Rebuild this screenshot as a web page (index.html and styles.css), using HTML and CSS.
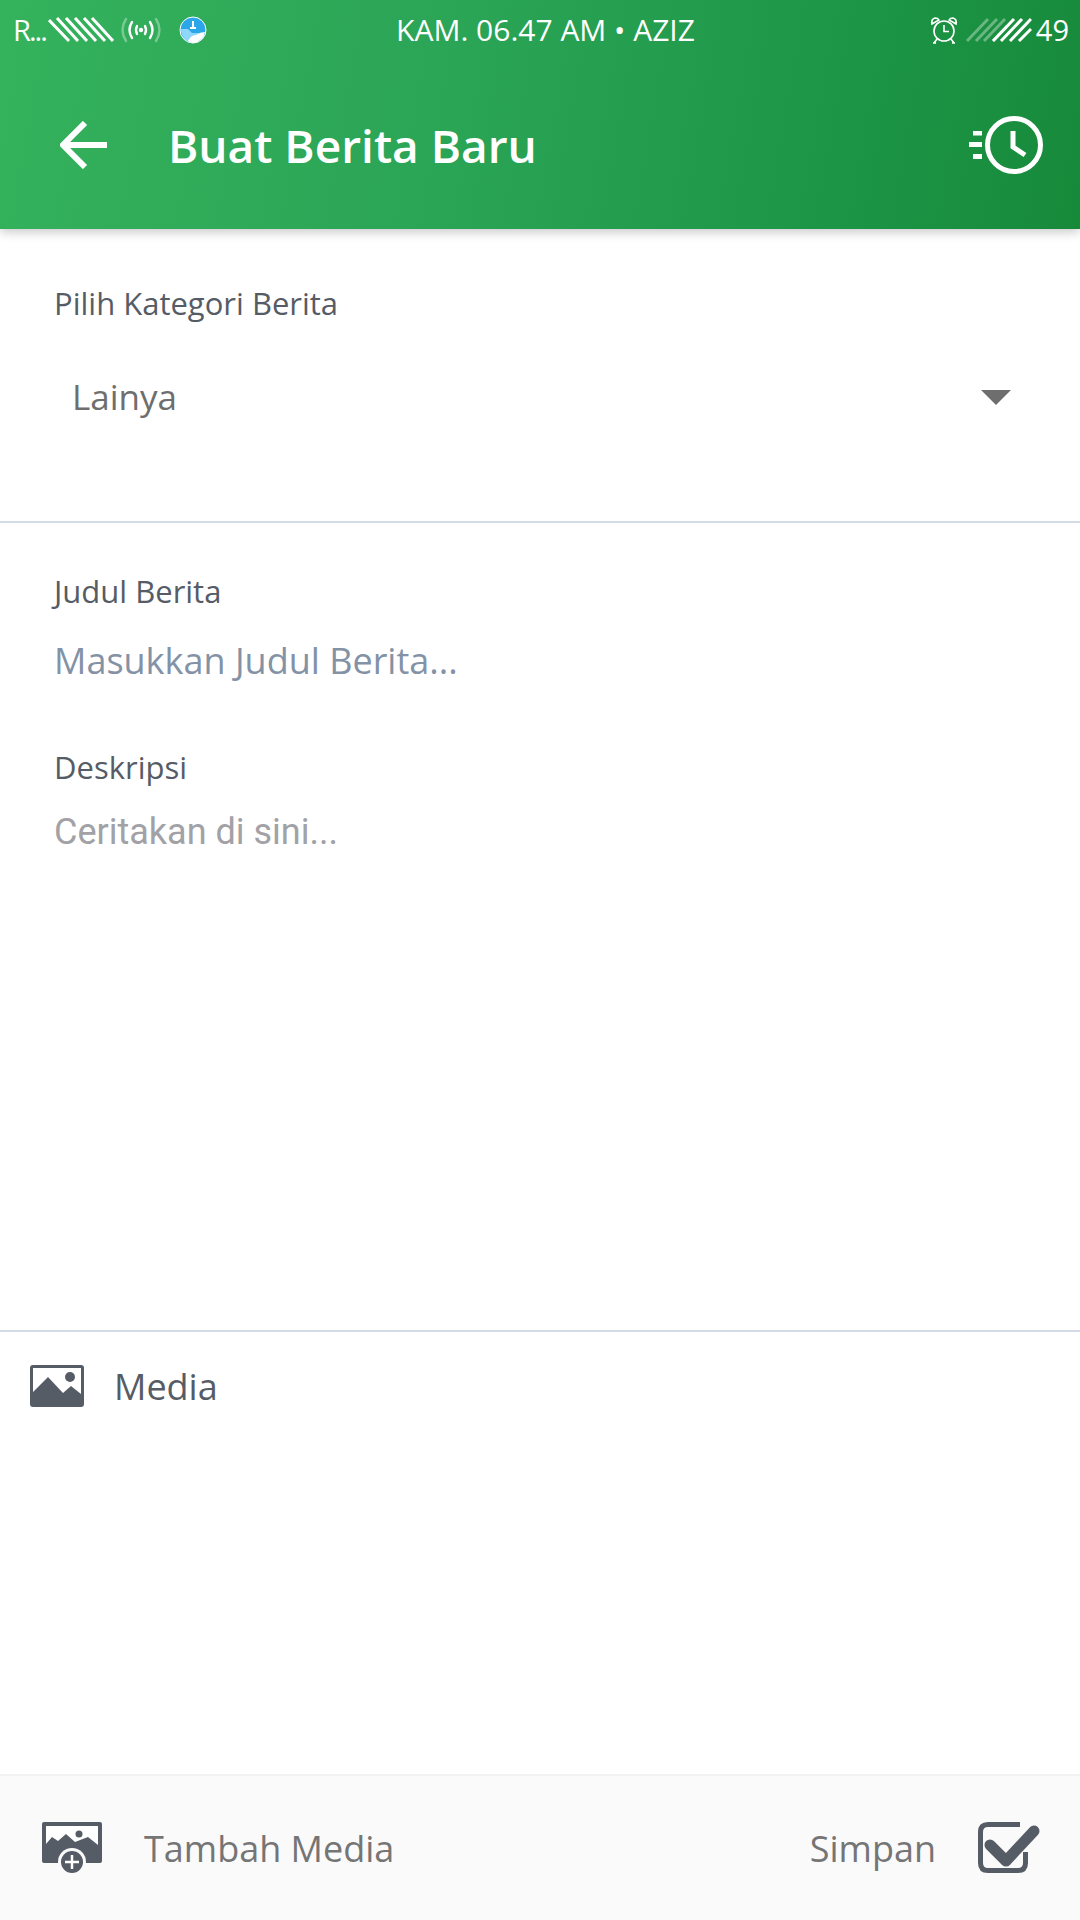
FILE: index.html
```html
<!DOCTYPE html>
<html lang="id">
<head>
    <meta charset="UTF-8">
    <meta name="viewport" content="width=device-width, initial-scale=1.0">
    <title>Buat Berita Baru</title>
    <link rel="stylesheet" href="styles.css">
</head>
<body>
    <div class="app">
        <header class="header">
            <div class="status-bar">
                <div class="status-left">
                    <span class="carrier">R...</span>
                    <svg class="hatch" width="66" height="26" viewBox="0 0 66 26">
                        <g stroke="#fff" stroke-width="3" fill="none">
                            <path d="M1 3 L21 24M9 1 L30 24M18 1 L39 24M27 1 L48 24M36 1 L57 24M44 1 L65 24"/>
                        </g>
                    </svg>
                    <svg class="hotspot" width="42" height="26" viewBox="0 0 42 26">
                        <g stroke="#fff" stroke-width="2.4" fill="none" stroke-linecap="round">
                            <path d="M6 2 Q-1 13 6 24M36 2 Q43 13 36 24" opacity="0.35"/>
                            <path d="M12 5 Q7 13 12 21M30 5 Q35 13 30 21"/>
                            <path d="M17 9 Q15 13 17 17M25 9 Q27 13 25 17"/>
                        </g>
                        <circle cx="21" cy="13" r="2.2" fill="#fff"/>
                    </svg>
                    <svg class="weather" width="28" height="28" viewBox="0 0 28 28">
                        <circle cx="14" cy="14" r="13" fill="#2ba6e8" stroke="#fff" stroke-width="1"/>
                        <path d="M1.500 13 H9 L13 17 H20 L14 27 Q4 27 1.500 13Z" fill="#8fd6fb"/>
                        <path d="M9 25 Q12 19 17 19 Q21 16 26 16 Q25 25 14 27 Q11 27 9 25Z" fill="#fff"/>
                        <path d="M13 5 H15 V11 H17 V13 H11 V11 H13Z" fill="#fff"/>
                    </svg>
                </div>
                <div class="status-center">KAM. 06.47 AM • AZIZ</div>
                <div class="status-right">
                    <svg class="alarm" width="28" height="28" viewBox="0 0 28 28">
                        <g stroke="#fff" stroke-width="1.6" fill="none">
                            <circle cx="14" cy="15" r="10"/>
                            <path d="M14 9 V15.500 H19"/>
                            <path d="M2 8 Q1 3 5 2 Q8 2 9 4Z M26 8 Q27 3 23 2 Q20 2 19 4Z"/>
                            <path d="M7 23 L4 27M21 23 L24 27M3 27 H6M22 27 H25"/>
                        </g>
                    </svg>
                    <svg class="hatch" width="66" height="26" viewBox="0 0 66 26">
                        <g stroke="#fff" stroke-width="3" fill="none">
                            <path d="M1 24 L22 2M10 24 L31 2M18 24 L39 2M27 24 L41 9" opacity="0.35"/>
                            <path d="M27 24 L48 2M35 24 L56 2M44 24 L65 2M53 24 L65 12"/>
                        </g>
                    </svg>
                    <span>49</span>
                </div>
            </div>
            <div class="toolbar">
                <svg class="back-icon" width="48" height="48" viewBox="0 0 48 48">
                    <path d="M47 24 H4 M25 2 L3 24 L25 46" stroke="#fff" stroke-width="6" fill="none"/>
                </svg>
                <h1 class="title">Buat Berita Baru</h1>
                <svg class="history-icon" width="76" height="60" viewBox="0 0 76 60">
                    <circle cx="46" cy="30" r="26.500" stroke="#fff" stroke-width="5" fill="none"/>
                    <path d="M45 16 V32 L57 40" stroke="#fff" stroke-width="5" fill="none"/>
                    <path d="M5 16 H14 V20.500 H5Z M1 27 H14 V32 H1Z M5 39 H14 V44 H5Z" fill="#fff"/>
                </svg>
            </div>
        </header>

        <section class="category">
            <label class="field-label">Pilih Kategori Berita</label>
            <div class="select">
                <span class="select-value">Lainya</span>
                <span class="select-arrow"></span>
            </div>
        </section>

        <section class="form">
            <label class="field-label">Judul Berita</label>
            <div class="title-input">Masukkan Judul Berita...</div>
            <label class="field-label desc-label">Deskripsi</label>
            <div class="desc-input">Ceritakan di sini...</div>
        </section>

        <section class="media">
            <svg class="media-icon" width="54" height="42" viewBox="0 0 54 42">
                <rect width="54" height="42" rx="3" fill="#565c66"/>
                <rect x="3" y="3" width="48" height="29" fill="#fff"/>
                <path d="M3 27 L18 12 L33 28 L41 21 L51 29 V36 H3Z" fill="#565c66"/>
                <circle cx="40" cy="12" r="5" fill="#565c66"/>
            </svg>
            <span class="media-text">Media</span>
        </section>

        <footer class="footer">
            <div class="footer-action">
                <svg class="add-icon" width="60" height="52" viewBox="0 0 60 52">
                    <rect y="0" width="60" height="41" rx="2" fill="#565c66"/>
                    <rect x="4" y="4" width="52" height="21" fill="#fff"/>
                    <path d="M4 22 L10 15 L16 19 L24 12 L33 20 L46 15 L56 23 V30 H4Z" fill="#565c66"/>
                    <circle cx="37" cy="12" r="3.500" fill="#565c66"/>
                    <circle cx="30" cy="40" r="14" fill="#fafafa"/>
                    <circle cx="30" cy="40" r="11" fill="#565c66"/>
                    <path d="M30 33 V47 M23 40 H37" stroke="#fff" stroke-width="2.500"/>
                </svg>
                <span>Tambah Media</span>
            </div>
            <div class="footer-action">
                <span>Simpan</span>
                <svg class="save-icon" width="62" height="52" viewBox="0 0 62 52">
                    <path d="M47.500 30 V41 Q47.500 48.500 40 48.500 H10 Q2.500 48.500 2.500 41 V10 Q2.500 2.500 10 2.500 H42" stroke="#565c66" stroke-width="5" fill="none"/>
                    <path d="M12 23 L28 39 L56 9" stroke="#565c66" stroke-width="11" stroke-linejoin="round" stroke-linecap="round" fill="none"/>
                </svg>
            </div>
        </footer>
    </div>
</body>
</html>
```
FILE: styles.css
```css
* {
    box-sizing: border-box;
    padding: 0;
    margin: 0;
}

body {
    font-family: "Open Sans", "Noto Sans", sans-serif;
    background-color: #fff;
    color: #565c66;
}

.app {
    display: flex;
    flex-direction: column;
    width: 1080px;
    height: 1920px;
    overflow: hidden;
}

.header {
    height: 229px;
    background: linear-gradient(100deg, #35b25c 0%, #2ba556 40%, #1c9445 80%, #178a3a 100%);
    box-shadow: 0 3px 10px rgba(0, 0, 0, 0.22);
    color: #fff;
    position: relative;
}

.status-bar {
    display: grid;
    grid-template-columns: 1fr auto 1fr;
    align-items: center;
    height: 59px;
    padding: 0 11px 0 13px;
    font-size: 29px;
}

.status-left {
    display: flex;
    align-items: center;
}

.carrier {
    width: 35px;
    letter-spacing: -2px;
}

.hotspot {
    margin-left: 6px;
}

.weather {
    margin-left: 17px;
}

.status-center {
    font-size: 30px;
    text-align: center;
    padding-left: 9px;
}

.status-right {
    display: flex;
    align-items: center;
    justify-content: flex-end;
}

.status-right .hatch {
    margin-left: 8px;
}

.status-right span {
    margin-left: 4px;
}

.toolbar {
    display: flex;
    align-items: center;
    height: 170px;
    padding: 1px 36px 0 60px;
}

.title {
    flex: 1;
    margin-left: 60px;
    font-size: 46px;
    font-weight: 600;
}

.category {
    height: 294px;
    padding: 52px 54px 0;
    border-bottom: 2px solid #d3dce6;
}

.field-label {
    display: block;
    font-size: 31px;
    line-height: 44px;
    color: #565c66;
}

.select {
    display: flex;
    align-items: center;
    justify-content: space-between;
    height: 48px;
    margin-top: 48px;
    padding: 0 15px 0 18px;
}

.select-value {
    margin-bottom: 2px;
    font-size: 35px;
    color: #6e6e6e;
}

.select-arrow {
    width: 0;
    height: 0;
    border-left: 15px solid transparent;
    border-right: 15px solid transparent;
    border-top: 15px solid #6e6e6e;
}

.form {
    height: 809px;
    padding: 46px 54px 0;
    border-bottom: 2px solid #d3dce6;
}

.title-input {
    margin-top: 23px;
    font-size: 36px;
    line-height: 50px;
    color: #8492a6;
}

.desc-label {
    margin-top: 59px;
}

.desc-input {
    margin-top: 21px;
    font-family: Roboto, sans-serif;
    font-size: 36px;
    line-height: 44px;
    color: #a1a1a6;
}

.media {
    display: flex;
    align-items: center;
    height: 108px;
    padding: 0 30px;
    margin-bottom: 334px;
}

.media-text {
    margin-left: 30px;
    font-size: 36px;
}

.footer {
    display: flex;
    align-items: center;
    justify-content: space-between;
    height: 146px;
    padding: 0 40px 0 42px;
    background-color: #fafafa;
    border-top: 2px solid #f3f3f3;
    font-size: 36px;
    color: #757575;
}

.footer-action {
    display: flex;
    align-items: center;
    gap: 42px;
}
```
